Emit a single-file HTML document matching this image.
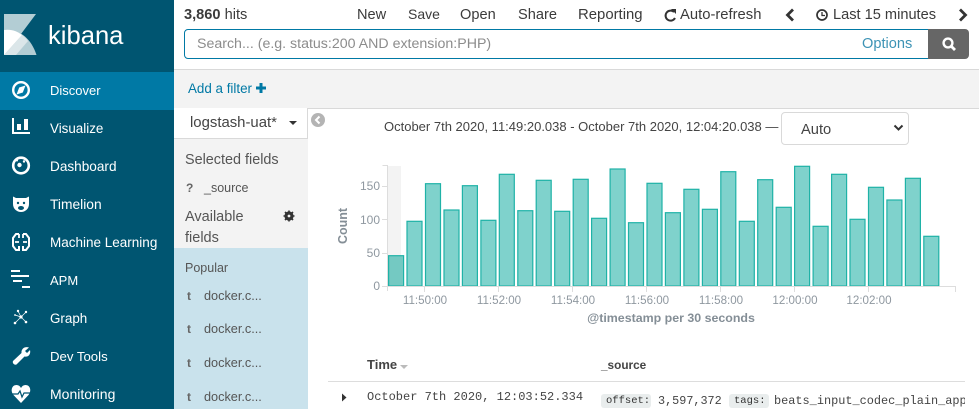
<!DOCTYPE html>
<html><head><meta charset="utf-8">
<style>
html,body{margin:0;padding:0;width:979px;height:409px;overflow:hidden;background:#fff}
body{font-family:"Liberation Sans",sans-serif;position:relative;color:#3f3f3f}
.a{position:absolute;white-space:nowrap}
.n{color:#fff;font-size:13.5px;left:50px;line-height:20px}
.t{font-size:14.6px;top:5px;line-height:20px;color:#3b3b3b}
.f{font-size:12.7px;left:204px;color:#555;line-height:16px}
.ft{font-size:12px;left:187px;color:#666;font-weight:bold;line-height:16px}
</style></head><body>
<div class="a" style="left:0;top:0;width:174px;height:409px;background:#005571"></div>
<div class="a" style="left:0;top:72px;width:174px;height:38px;background:#0079a5"></div>
<svg class="a" style="left:0;top:0" width="174" height="409">
<polygon points="4,14 36,14 21,34 4,30" fill="#b3cdd4"/>
<path d="M4,30 C19,28.5 31,38 36.5,55 L4,55Z" fill="#b3cdd4"/>
<path d="M4,30 C11,29 17,31 22,35 L4,55Z" fill="#fff"/>
<path d="M22,35 C24,36.5 26,38 28,41 L16,55 L4,55Z" fill="#dbe6e9"/>
<g fill="none" stroke="#fff" stroke-width="2.4">
<circle cx="21" cy="90" r="7.8"/>
<circle cx="21" cy="165.5" r="7.8" stroke-width="2.6"/>
<path d="M19,234 H16 L13,238 V246 L16,250 H19 V246 M23,234 H26 L29,238 V246 L26,250 H23 V246" stroke-width="2"/>
<path d="M15,242 H19 M27,242 H23 M19,234 V238 M23,234 V238" stroke-width="1.8"/>
</g>
<path d="M25.5,85.5 L22.8,92.5 L16.5,94.5 L19.2,87.5Z" fill="#fff"/>
<g fill="#fff">
<rect x="12" y="118" width="2" height="16"/><rect x="12" y="132" width="18" height="2"/>
<rect x="17" y="124" width="4" height="6"/><rect x="24" y="119" width="4" height="11"/>
<circle cx="19.5" cy="165" r="2.2"/><circle cx="24" cy="161.5" r="1.2"/><circle cx="17" cy="160.5" r="1"/>
<path d="M13,196.5 L16,198 H26 L29,196.5 V204 C29,209 25,212 21,212 C17,212 13,209 13,204Z"/>
<rect x="11" y="270" width="9" height="2"/><rect x="11" y="275" width="18" height="2"/>
<rect x="13" y="280" width="9" height="2"/><rect x="22" y="286" width="8" height="2"/>
<circle cx="21" cy="317" r="1.6"/><circle cx="18" cy="311" r="1.2"/><circle cx="26" cy="312" r="1.2"/><circle cx="15" cy="323" r="1.3"/><circle cx="26" cy="322" r="1.3"/><circle cx="15" cy="315" r="0.9"/>
<path d="M29,347.5 C25,346 21,348.5 21.5,353 L13,361 A2.7,2.7 0 0 0 16.5,364.5 L24.5,356.5 C28.5,357.5 31,354 30,350 L27,353 L25,351Z"/>
<path d="M21,403 L13.5,395 C10,390.5 12,385 16.5,385 C18.5,385 20,386 21,388 C22,386 23.5,385 25.5,385 C30,385 32,390.5 28.5,395Z"/>
</g>
<g fill="#005571"><circle cx="18" cy="203" r="1.2"/><circle cx="24" cy="203" r="1.2"/><ellipse cx="21" cy="208" rx="3" ry="2"/></g>
<path d="M12,394 H18 L20,391 L22,397 L24,393 H30" fill="none" stroke="#005571" stroke-width="1.2"/>
<path d="M18,311 L21,317 L26,312 M15,323 L21,317 L26,322 M15,315 L21,317" stroke="#fff" stroke-width="0.7" fill="none"/>
</svg>
<div class="a" style="left:48px;top:19px;font-size:25.6px;line-height:34px;color:#fff">kibana</div>
<div class="a n" style="top:81px;font-size:13px">Discover</div>
<div class="a n" style="top:119px;font-size:13.4px">Visualize</div>
<div class="a n" style="top:157px;font-size:13.6px">Dashboard</div>
<div class="a n" style="top:195px;font-size:13.8px">Timelion</div>
<div class="a n" style="top:233px">Machine Learning</div>
<div class="a n" style="top:271px;font-size:13px">APM</div>
<div class="a n" style="top:309px;font-size:13.4px">Graph</div>
<div class="a n" style="top:347px;font-size:13.2px">Dev Tools</div>
<div class="a n" style="top:384px;font-size:14px">Monitoring</div>

<div class="a t" style="left:184px"><b>3,860</b> hits</div>
<div class="a t" style="left:357px">New</div>
<div class="a t" style="left:408px;top:4px;font-size:14px">Save</div>
<div class="a t" style="left:460px">Open</div>
<div class="a t" style="left:518px">Share</div>
<div class="a t" style="left:578px;font-size:14.9px">Reporting</div>
<div class="a t" style="left:680px;font-size:14.8px">Auto-refresh</div>
<div class="a t" style="left:833px">Last 15 minutes</div>
<svg class="a" style="left:660px;top:6px" width="319" height="20" fill="none" stroke="#333">
<path d="M14,6 A5,5 0 1 0 15,12" stroke-width="2"/><path d="M11,3 L16,3 L16,8Z" fill="#333" stroke="none"/>
<path d="M133,3.5 L127.5,9 L133,14.5" stroke-width="2.8"/>
<circle cx="162" cy="9" r="5" stroke-width="1.7"/><path d="M162,6 V9.5 H165" stroke-width="1.3"/>
<path d="M300,3.5 L305.5,9 L300,14.5" stroke-width="2.8"/>
</svg>
<div class="a" style="left:184px;top:29px;width:743px;height:28px;border:1px solid #0079a5;border-radius:4px 0 0 4px"></div>
<div class="a" style="left:197px;top:34px;font-size:14.2px;line-height:20px;color:#8c8c8c">Search... (e.g. status:200 AND extension:PHP)</div>
<div class="a" style="left:862px;top:34px;font-size:14.6px;line-height:20px;color:#3d93b5">Options</div>
<div class="a" style="left:928px;top:29px;width:41px;height:30px;background:#666;border-radius:0 4px 4px 0"></div>
<svg class="a" style="left:940px;top:36px" width="18" height="16" fill="none" stroke="#fff"><circle cx="8" cy="7" r="4.4" stroke-width="2.4"/><path d="M11,10 L15,14" stroke-width="2.8"/></svg>

<div class="a" style="left:174px;top:69px;width:805px;height:38px;background:#f3f3f3;border-top:1px solid #d9d9d9;border-bottom:1px solid #d9d9d9"></div>
<div class="a" style="left:188px;top:80px;font-size:13.4px;line-height:18px;color:#0079a5">Add a filter</div>
<svg class="a" style="left:255px;top:82px" width="12" height="12"><path d="M1,6 H11 M6,1 V11" stroke="#0079a5" stroke-width="3"/></svg>

<div class="a" style="left:174px;top:108px;width:134px;height:301px;background:#f3f3f3"></div>
<div class="a" style="left:174px;top:108px;width:133px;height:30px;background:#fff;border-right:1px solid #d9d9d9;border-bottom:1px solid #d9d9d9"></div>
<div class="a" style="left:190px;top:113px;font-size:14.9px;line-height:20px;color:#444">logstash-uat*</div>
<svg class="a" style="left:288px;top:120px" width="10" height="6"><path d="M1,1 H9 L5,5Z" fill="#333"/></svg>
<div class="a" style="left:185px;top:150px;font-size:14.4px;line-height:20px;color:#555">Selected fields</div>
<div class="a ft" style="left:186px;top:180px">?</div>
<div class="a f" style="left:204px;top:180px;font-size:12.5px">_source</div>
<div class="a" style="left:185px;top:207px;font-size:14.5px;line-height:21px;color:#555">Available<br>fields</div>
<svg class="a" style="left:283px;top:210px" width="12" height="12"><circle cx="6" cy="6" r="3.4" fill="none" stroke="#333" stroke-width="2.4"/><path d="M6,0.5 V11.5 M0.5,6 H11.5 M2,2 L10,10 M10,2 L2,10" stroke="#333" stroke-width="1.6"/><circle cx="6" cy="6" r="1.4" fill="#f3f3f3"/></svg>
<div class="a" style="left:174px;top:248px;width:134px;height:161px;background:#c9e2ec"></div>
<div class="a" style="left:185px;top:260px;font-size:12.5px;line-height:16px;color:#555">Popular</div>
<div class="a ft" style="top:288px">t</div><div class="a f" style="top:288px">docker.c...</div>
<div class="a ft" style="top:321px">t</div><div class="a f" style="top:321px">docker.c...</div>
<div class="a ft" style="top:355px">t</div><div class="a f" style="top:355px">docker.c...</div>
<div class="a ft" style="top:389px">t</div><div class="a f" style="top:389px">docker.c...</div>
<svg class="a" style="left:311px;top:113px" width="15" height="15"><circle cx="7" cy="7" r="7" fill="#b4b4b4"/><path d="M8.5,3.5 L5,7 L8.5,10.5" fill="none" stroke="#fff" stroke-width="2"/></svg>

<div class="a" style="left:384px;top:117px;font-size:13px;line-height:20px;color:#444">October 7th 2020, 11:49:20.038 - October 7th 2020, 12:04:20.038 —</div>
<div class="a" style="left:781px;top:112px;width:126px;height:31px;border:1px solid #d9d9d9;border-radius:4px;background:#fff"></div>
<div class="a" style="left:801px;top:120px;font-size:14.7px;line-height:20px;color:#444">Auto</div>
<svg class="a" style="left:893px;top:124px" width="12" height="8"><path d="M1.5,1.5 L5.5,5.5 L9.5,1.5" fill="none" stroke="#333" stroke-width="2"/></svg>

<svg class="a" style="left:330px;top:155px" width="640" height="175" font-family="Liberation Sans,sans-serif" id="c">
<rect x="58" y="11" width="13" height="120" fill="#f3f3f3"/>
<g fill="#7fd2cc" stroke="#1fb2a7" stroke-width="1.2">
<rect x="58.6" y="100.7" width="15" height="30.3" fill="#74c9c2"/>
<rect x="77" y="66.3" width="15" height="64.7"/>
<rect x="95.5" y="28.7" width="15" height="102.3"/>
<rect x="114" y="55" width="15" height="76"/>
<rect x="132.4" y="30.7" width="15" height="100.3"/>
<rect x="150.9" y="65.3" width="15" height="65.7"/>
<rect x="169.3" y="19.3" width="15" height="111.7"/>
<rect x="187.8" y="55.7" width="15" height="75.3"/>
<rect x="206.2" y="25.3" width="15" height="105.7"/>
<rect x="224.7" y="56.3" width="15" height="74.7"/>
<rect x="243.2" y="24.3" width="15" height="106.7"/>
<rect x="261.6" y="63.3" width="15" height="67.7"/>
<rect x="280.1" y="14" width="15" height="117"/>
<rect x="298.5" y="67.7" width="15" height="63.3"/>
<rect x="317" y="28.3" width="15" height="102.7"/>
<rect x="335.4" y="57.7" width="15" height="73.3"/>
<rect x="353.9" y="34.3" width="15" height="96.7"/>
<rect x="372.4" y="54.3" width="15" height="76.7"/>
<rect x="390.8" y="16.7" width="15" height="114.3"/>
<rect x="409.3" y="66.3" width="15" height="64.7"/>
<rect x="427.7" y="24.7" width="15" height="106.3"/>
<rect x="446.2" y="52.3" width="15" height="78.7"/>
<rect x="464.6" y="11.3" width="15" height="119.7"/>
<rect x="483.1" y="71.3" width="15" height="59.7"/>
<rect x="501.6" y="19.3" width="15" height="111.7"/>
<rect x="520" y="64.3" width="15" height="66.7"/>
<rect x="538.5" y="32.3" width="15" height="98.7"/>
<rect x="556.9" y="45" width="15" height="86"/>
<rect x="575.4" y="23.3" width="15" height="107.7"/>
<rect x="593.8" y="81.3" width="15" height="49.7"/>
</g>
<g stroke="#ddd" fill="none"><path d="M52.5,10.5 H57.5 V136 M52,31.5 H57 M52,64.5 H57 M52,98.5 H57 M52,131.5 H625.5 V137 M94.5,131 V137 M168.5,131 V137 M242.5,131 V137 M316.5,131 V137 M390.5,131 V137 M464.5,131 V137 M538.5,131 V137"/></g>
<g font-size="12" fill="#8f98a0" text-anchor="end">
<text x="50" y="35">150</text><text x="50" y="69">100</text><text x="50" y="102">50</text><text x="50" y="135">0</text></g>
<g font-size="11.6" fill="#8f98a0" text-anchor="middle">
<text x="95" y="149">11:50:00</text><text x="169" y="149">11:52:00</text><text x="243" y="149">11:54:00</text><text x="317" y="149">11:56:00</text><text x="391" y="149">11:58:00</text><text x="465" y="149">12:00:00</text><text x="539" y="149">12:02:00</text></g>
<text x="341" y="167" font-size="12.4" font-weight="bold" fill="#848e96" text-anchor="middle">@timestamp per 30 seconds</text>
<text transform="translate(17,71) rotate(-90)" font-size="12.5" font-weight="bold" fill="#848e96" text-anchor="middle">Count</text>
</svg>

<div class="a" style="left:367px;top:356px;font-size:13px;line-height:18px;font-weight:bold;color:#444">Time</div>
<svg class="a" style="left:400px;top:364px" width="10" height="6"><path d="M0,1 H8 L4,5Z" fill="#bbb"/></svg>
<div class="a" style="left:601px;top:356px;font-size:11.8px;line-height:18px;font-weight:bold;color:#444">_source</div>
<div class="a" style="left:328px;top:381px;width:637px;height:1px;background:#ddd"></div>
<svg class="a" style="left:341px;top:393px" width="7" height="9"><path d="M1,0.5 L5.5,4.5 L1,8.5Z" fill="#333"/></svg>
<div class="a" style="left:367px;top:389px;font-family:'Liberation Mono',monospace;font-size:12px;line-height:16px;color:#444">October 7th 2020, 12:03:52.334</div>
<div class="a" style="left:601px;top:394px;height:14px;width:50px;background:#e9eded;border-radius:3px;font-family:'Liberation Mono',monospace;font-size:10.5px;line-height:15px;text-indent:5px;color:#333">offset:</div>
<div class="a" style="left:658px;top:393px;font-family:'Liberation Mono',monospace;font-size:11.8px;line-height:16px;color:#444">3,597,372</div>
<div class="a" style="left:729px;top:394px;height:14px;width:40px;background:#e9eded;border-radius:3px;font-family:'Liberation Mono',monospace;font-size:10.5px;line-height:15px;text-indent:5px;color:#333">tags:</div>
<div class="a" style="left:774px;top:393px;width:191px;overflow:hidden;font-family:'Liberation Mono',monospace;font-size:11.9px;line-height:16px;color:#444">beats_input_codec_plain_applied</div>
</body></html>
